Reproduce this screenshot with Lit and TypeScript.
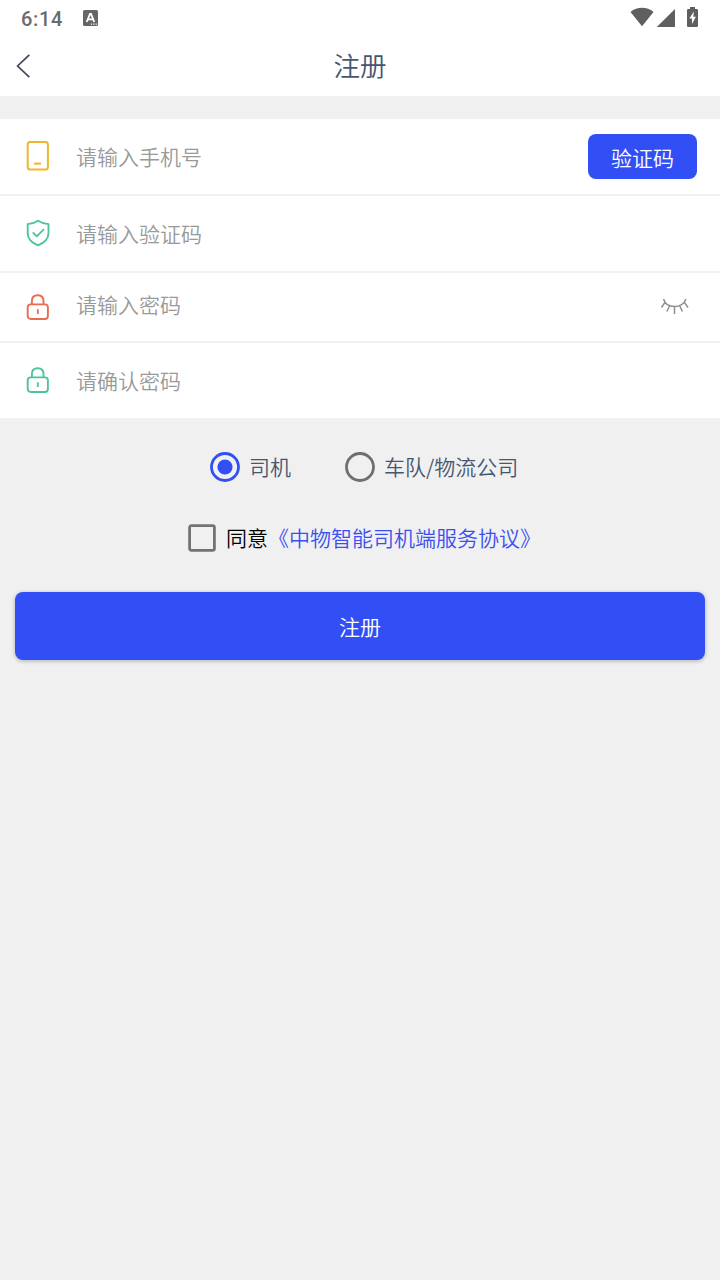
import { LitElement, html, svg, css } from "lit";
import { customElement, property, state } from "lit/decorators.js";

const lock = (color: string) => svg`
  <g fill="none" stroke=${color} stroke-width="1.9">
    <path d="M8.9 12.200V8.900C8.900 5.200 11.300 3.200 14.700 3.200S20.500 5.200 20.500 8.900V12.200" />
    <rect x="4.700" y="12.400" width="20.200" height="14.600" rx="3" />
    <path d="M14.800 17.200V22" stroke-width="1.800" />
  </g>`;

const phoneIcon = svg`
  <g fill="none" stroke="#efb62f" stroke-width="2">
    <rect x="4.700" y="0.900" width="20.200" height="27.600" rx="2.600" />
    <path d="M11 22.600H18" stroke-width="2.100" />
  </g>`;

const shieldIcon = svg`
  <g fill="none" stroke="#4fc49c" stroke-width="1.900" stroke-linejoin="round">
    <path d="M15 2.700C18.200 4.800 21.400 5.700 25.500 6.100V14.900C25.500 21.100 20.800 24.900 15 27.300C9.200 24.900 4.700 21.100 4.700 14.900V6.100C8.800 5.700 12 4.800 15 2.700Z" />
    <path d="M9.800 14.300L13.800 18.300L21 11.100" />
  </g>`;

@customElement("status-bar")
class StatusBar extends LitElement {
  static styles = css`
    :host { display: flex; height: 36px; align-items: center; justify-content: space-between;
      padding: 0 21px; box-sizing: border-box; background: #fff; }
    .left { display: flex; align-items: center; gap: 20px; }
    .time { font: 500 20px/36px Roboto, sans-serif; color: #6b6b6b; letter-spacing: .7px; padding-top: 2px; }
    svg { display: block; }
  `;
  render() {
    return html`
      <div class="left">
        <span class="time">6:14</span>
        <svg width="15" height="16" viewBox="0 0 15 16">
          <rect width="15" height="16" rx="1.5" fill="#666" />
          <path d="M3.700 12L7 4H8L11.300 12M5 9.400H10" fill="none" stroke="#fff" stroke-width="1.900" />
          <path d="M7.800 14.200h1.300M10.200 14.200h1.300M12.600 14.200h1.300" stroke="#fff" stroke-width="1.200" />
        </svg>
      </div>
      <svg width="69" height="22" viewBox="630 7 69 22" fill="#5f5f5f">
        <path d="M630.500 12C637 6.400 647 6.400 653.500 12L642 26.200Z" />
        <path d="M675 9V27H656.800Z" />
        <path d="M690 7h5v2h1.800q1.200 0 1.200 1.200v15.600q0 1.200-1.200 1.200h-8.600q-1.200 0-1.200-1.200V10.200q0-1.200 1.200-1.200H690Z" />
        <path d="M693.800 11.500L689.400 18.600H692V24L695.900 16.800H693.300Z" fill="#fff" />
      </svg>`;
  }
}

@customElement("form-row")
class FormRow extends LitElement {
  @property() placeholder = "";
  @property({ attribute: false }) icon?: unknown;
  static styles = css`
    :host { display: flex; box-sizing: border-box; align-items: center; background: #fff; padding: 0 23px; }
    .icon { display: block; flex: none; }
    .label { flex: 1; margin-left: 25px; color: #999; font-size: 21px; font-weight: 350; line-height: 30px; padding-bottom: 1px; }
    :host(.compact) .label { padding-bottom: 7px; }
  `;
  render() {
    return html`
      <svg class="icon" width="28" height="31" viewBox="0 0 28 31">${this.icon}</svg>
      <span class="label">${this.placeholder}</span>
      <slot></slot>`;
  }
}

@customElement("app-root")
class AppRoot extends LitElement {
  @state() selected = "driver";
  static styles = css`
    :host { display: flex; flex-direction: column; min-height: 1280px; background: #f0f0f0;
      font-family: "Noto Sans CJK SC", sans-serif; font-weight: 350; font-size: 21px; }
    svg { display: block; flex: none; }
    .header { display: grid; grid-template-columns: 48px 1fr 48px; align-items: center; height: 60px; background: #fff; }
    .back { margin-left: 15px; }
    .title { text-align: center; font-size: 26.500px; line-height: 40px; color: #475670; padding-bottom: 2px; }
    .form { display: grid; grid-template-rows: 75px 75px 68px 75px; gap: 2px; margin-top: 23px; }
    .code { width: 109px; height: 45px; border-radius: 8px; background: #324ff5; color: #fff; text-align: center; line-height: 46px; }
    .roles { display: flex; height: 30px; align-items: center; margin: 34px 0 0 210px; color: #475670; }
    .role { display: flex; align-items: center; gap: 9px; line-height: 30px; }
    .role + .role { margin-left: 54px; }
    .agree { display: flex; align-items: center; height: 30px; line-height: 30px; margin: 41px 0 0 188px; color: #000; }
    .agree svg { margin-right: 10px; }
    .role span, .agree > span { line-height: 28px; padding-bottom: 2px; }
    .link { color: #3a4ff0; }
    .submit { margin: 39px 15px 0; height: 68px; border-radius: 8px; background: #324ff5; color: #fff; text-align: center;
      line-height: 68px; box-shadow: 0 1px 4px rgba(0, 0, 0, .28); }
  `;

  radio(on: boolean) {
    return html`<svg width="30" height="30" viewBox="0 0 30 30">
      <circle cx="15" cy="15" r="13.500" fill="none" stroke=${on ? "#324ff5" : "#6f6f6f"} stroke-width="2.800" />
      ${on ? svg`<circle cx="15" cy="15" r="7.600" fill="#324ff5" />` : ""}
    </svg>`;
  }

  render() {
    return html`
      <status-bar></status-bar>
      <div class="header">
        <svg class="back" width="18" height="26" viewBox="0 0 18 26">
          <path d="M14.300 1.800L2.600 13L14.300 24.200" fill="none" stroke="#44445c" stroke-width="1.700" />
        </svg>
        <span class="title">注册</span>
      </div>
      <div class="form">
        <form-row placeholder="请输入手机号" .icon=${phoneIcon}>
          <div class="code">验证码</div>
        </form-row>
        <form-row placeholder="请输入验证码" .icon=${shieldIcon}></form-row>
        <form-row class="compact" placeholder="请输入密码" .icon=${lock("#ec6a50")}>
          <svg width="37" height="18" viewBox="660 298 37 18">
            <path d="M663.500 299C665 304 669.500 306.600 674.500 306.600S684 304 686 299M664.800 302.600L661.500 307.500M669.600 306L666.800 311.500M674.500 306.600V314M679.800 306L682.400 311.500M684.600 302.600L688 307.500"
              fill="none" stroke="#8e8e8e" stroke-width="1.500" />
          </svg>
        </form-row>
        <form-row placeholder="请确认密码" .icon=${lock("#4fc49c")}></form-row>
      </div>
      <div class="roles">
        <div class="role" @click=${() => (this.selected = "driver")}>${this.radio(this.selected === "driver")}<span>司机</span></div>
        <div class="role" @click=${() => (this.selected = "company")}>${this.radio(this.selected === "company")}<span>车队/物流公司</span></div>
      </div>
      <div class="agree">
        <svg width="28" height="28" viewBox="0 0 28 28">
          <rect x="1.600" y="1.600" width="24.800" height="24.800" rx="1.800" fill="none" stroke="#737373" stroke-width="2.800" />
        </svg>
        <span>同意<span class="link">《中物智能司机端服务协议》</span></span>
      </div>
      <div class="submit">注册</div>`;
  }
}
